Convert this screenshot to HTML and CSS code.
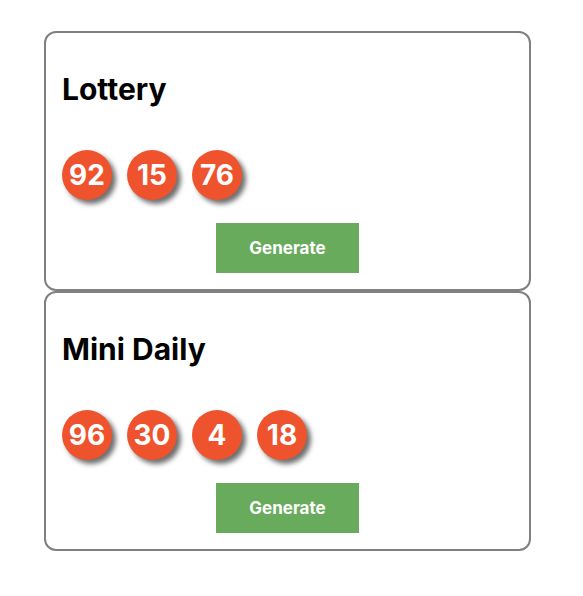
FILE: index.html
```html
<!DOCTYPE html>
<html lang="en">
<head>
    <meta charset="UTF-8">
    <meta name="viewport" content="width=device-width, initial-scale=1.0">
    <title>Lottery</title>

    <link rel="stylesheet" href="styles.css">
</head>
<body>

    <div class="container">
        <div class="card">
            <h2 class="title">Lottery</h2>
            <div class="balls">
                <div class="ball">92</div>
                <div class="ball">15</div>
                <div class="ball">76</div>
            </div>
            <div class="menu">
                <button>Generate</button>
            </div>
        </div>

        <div class="card">
            <h2 class="title">Mini Daily</h2>
            <div class="balls">
                <div class="ball">96</div>
                <div class="ball">30</div>
                <div class="ball">4</div>
                <div class="ball">18</div>
            </div>
            <div class="menu">
                <button>Generate</button>
            </div>
        </div>
    </div>

</body>
</html>
```

FILE: styles.css
```css
body{
    margin: 0;
    font-family: Inter, "Liberation Sans", sans-serif;
}

.container{
    width: 487px;
    padding-top: 31px;
    padding-left: 44px;
}

.card{
    border: 2px solid #808080;
    border-radius: 12px;
    padding: 38px 16px 16px 16px;
}

.title{
    margin: 0;
    font-size: 30px;
    font-weight: 700;
    color: #000;
}

.balls{
    display: flex;
    gap: 15px;
    margin-top: 43px;
}

.ball{
    width: 50px;
    height: 50px;
    border-radius: 50%;
    background: #ef532d;
    color: #fff;
    font-size: 28px;
    font-weight: 700;

    display: flex;
    justify-content: center;
    align-items: center;
    box-shadow: 4px 4px 5px #6f6f6f;
}

.menu{
    display: flex;
    justify-content: center;
    margin-top: 23px;
}

button{
    width: 143px;
    height: 50px;
    border: none;
    background: #68ab5d;
    color: #fff;
    font-family: Inter, "Liberation Sans", sans-serif;
    font-size: 17px;
    font-weight: 700;
}
```
